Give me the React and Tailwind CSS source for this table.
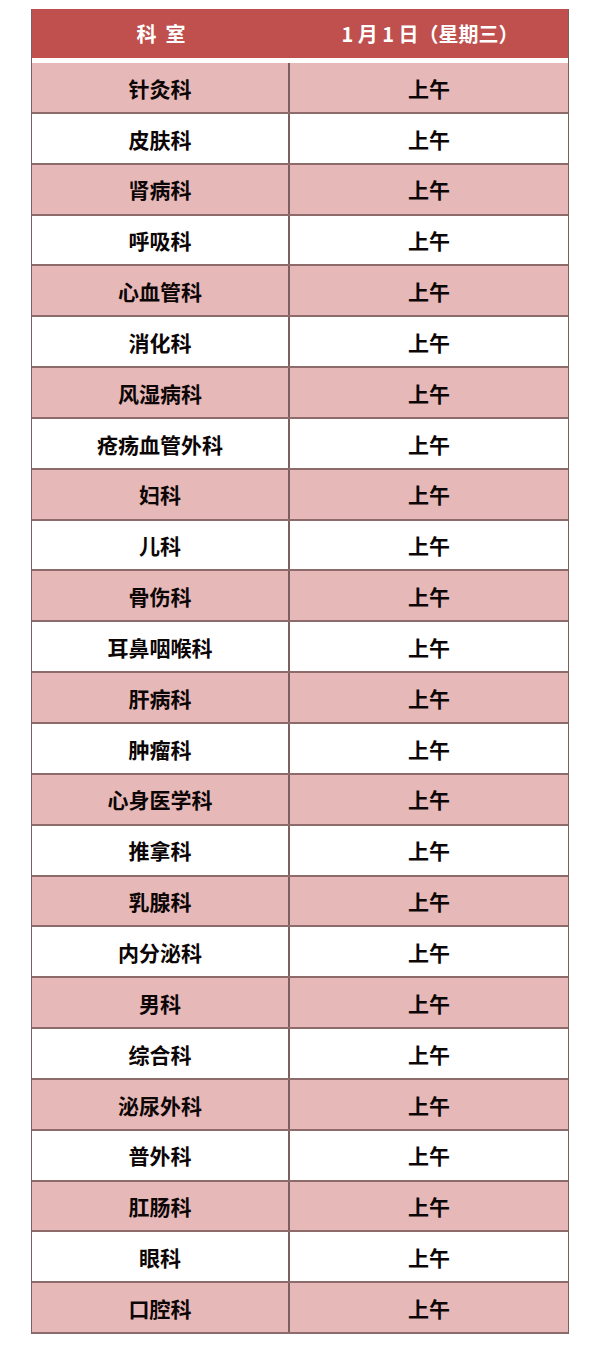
import React from "react";

const depts = [
  "针灸科",
  "皮肤科",
  "肾病科",
  "呼吸科",
  "心血管科",
  "消化科",
  "风湿病科",
  "疮疡血管外科",
  "妇科",
  "儿科",
  "骨伤科",
  "耳鼻咽喉科",
  "肝病科",
  "肿瘤科",
  "心身医学科",
  "推拿科",
  "乳腺科",
  "内分泌科",
  "男科",
  "综合科",
  "泌尿外科",
  "普外科",
  "肛肠科",
  "眼科",
  "口腔科",
];

const font = { fontFamily: '"Noto Sans CJK SC", "Noto Sans", sans-serif' };

export default function App() {
  return (
    <div className="min-h-[1346px] w-[595px] bg-white pt-[9px] pl-[31px]" style={font}>
      <div className="w-[538px] border-x-[1.5px] border-[#7d5f5f]">
        <div className="flex h-[49px] bg-[#c0504d] text-[20px] font-bold text-white">
          <div className="flex w-[258px] items-center justify-center whitespace-pre">科  室</div>
          <div className="flex flex-1 items-center justify-center whitespace-pre pl-[2px]">1 月 1 日（星期三）</div>
        </div>
        <div className="h-[5px] bg-white" />
        {depts.map((d, i) => (
          <div
            key={d}
            className={
              "flex h-[50.85px] border-b-2 border-[#8d6b6b] text-[21px] font-bold text-[#0d0606] " +
              (i % 2 === 0 ? "bg-[#e6b8b7]" : "bg-white")
            }
          >
            <div className="flex w-[258px] items-center justify-center border-r-2 border-[#7d5f5f] pt-[2px]">
              {d}
            </div>
            <div className="flex flex-1 items-center justify-center pt-[2px]">上午</div>
          </div>
        ))}
      </div>
    </div>
  );
}
